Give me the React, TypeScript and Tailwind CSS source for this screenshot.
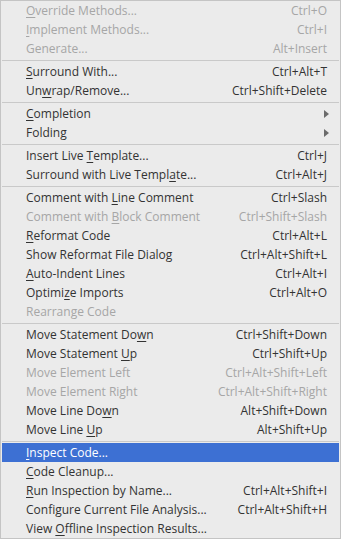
type Item =
  | { sep: true }
  | {
      sep?: false;
      label: string;
      mn?: number;
      key?: string;
      off?: boolean;
      sub?: boolean;
      active?: boolean;
    };

const items: Item[] = [
  { label: "Override Methods...", mn: 0, key: "Ctrl+O", off: true },
  { label: "Implement Methods...", mn: 0, key: "Ctrl+I", off: true },
  { label: "Generate...", key: "Alt+Insert", off: true },
  { sep: true },
  { label: "Surround With...", mn: 0, key: "Ctrl+Alt+T" },
  { label: "Unwrap/Remove...", mn: 2, key: "Ctrl+Shift+Delete" },
  { sep: true },
  { label: "Completion", mn: 0, sub: true },
  { label: "Folding", sub: true },
  { sep: true },
  { label: "Insert Live Template...", mn: 12, key: "Ctrl+J" },
  { label: "Surround with Live Template...", mn: 24, key: "Ctrl+Alt+J" },
  { sep: true },
  { label: "Comment with Line Comment", mn: 13, key: "Ctrl+Slash" },
  { label: "Comment with Block Comment", mn: 13, key: "Ctrl+Shift+Slash", off: true },
  { label: "Reformat Code", mn: 0, key: "Ctrl+Alt+L" },
  { label: "Show Reformat File Dialog", key: "Ctrl+Alt+Shift+L" },
  { label: "Auto-Indent Lines", mn: 0, key: "Ctrl+Alt+I" },
  { label: "Optimize Imports", mn: 6, key: "Ctrl+Alt+O" },
  { label: "Rearrange Code", off: true },
  { sep: true },
  { label: "Move Statement Down", mn: 17, key: "Ctrl+Shift+Down" },
  { label: "Move Statement Up", mn: 15, key: "Ctrl+Shift+Up" },
  { label: "Move Element Left", key: "Ctrl+Alt+Shift+Left", off: true },
  { label: "Move Element Right", key: "Ctrl+Alt+Shift+Right", off: true },
  { label: "Move Line Down", mn: 12, key: "Alt+Shift+Down" },
  { label: "Move Line Up", mn: 10, key: "Alt+Shift+Up" },
  { sep: true },
  { label: "Inspect Code...", mn: 0, active: true },
  { label: "Code Cleanup...", mn: 0 },
  { label: "Run Inspection by Name...", mn: 0, key: "Ctrl+Alt+Shift+I" },
  { label: "Configure Current File Analysis...", key: "Ctrl+Alt+Shift+H" },
  { label: "View Offline Inspection Results...", mn: 5 },
];

function Label({ text, mn }: { text: string; mn?: number }) {
  if (mn === undefined) return <span>{text}</span>;
  return (
    <span>
      {text.slice(0, mn)}
      <span className="underline underline-offset-2">{text[mn]}</span>
      {text.slice(mn + 1)}
    </span>
  );
}

export default function App() {
  return (
    <div
      className="w-[341px] h-[539px] bg-[#ebebeb] border border-[#c4c4c4] px-px text-[12px] leading-[19px] overflow-hidden"
      style={{ fontFamily: '"Open Sans", "DejaVu Sans", sans-serif' }}
    >
      {items.map((it, i) =>
        it.sep ? (
          <div key={i} className="h-[4px] flex flex-col justify-center">
            <div className="h-px bg-[#c9c9c9]" />
          </div>
        ) : (
          <div
            key={i}
            className={
              "h-[19px] flex items-center justify-between pl-[24px] pr-[12px] " +
              (it.active
                ? "bg-[#3d70d3] text-white"
                : it.off
                ? "text-[#a6a6a6]"
                : "text-[#333333]")
            }
          >
            <Label text={it.label} mn={it.mn} />
            {it.sub ? (
              <svg width="5" height="8" viewBox="0 0 5 8" className="-mr-[2px]">
                <path d="M0 0 L5 4 L0 8 Z" fill="#6b6b6b" />
              </svg>
            ) : (
              it.key && <span>{it.key}</span>
            )}
          </div>
        )
      )}
    </div>
  );
}
